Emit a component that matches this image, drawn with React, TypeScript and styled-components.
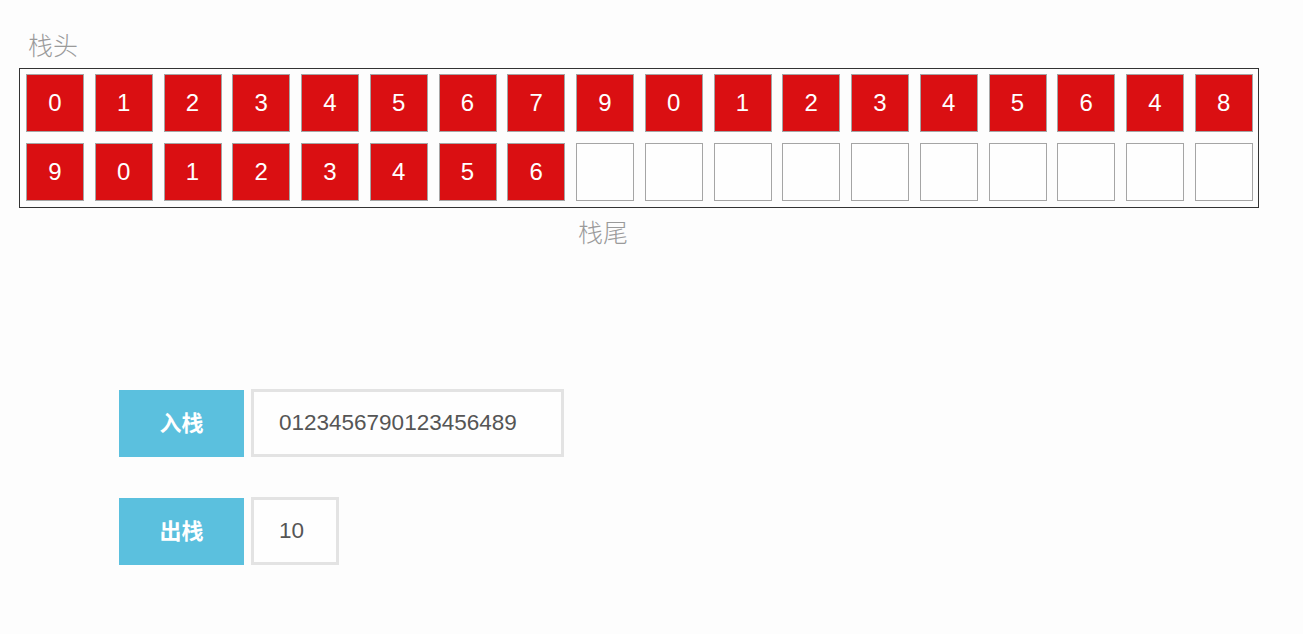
import React from "react";
import styled, { createGlobalStyle } from "styled-components";

const Global = createGlobalStyle`
  html, body { margin: 0; padding: 0; background: #fdfdfd; }
  body { font-family: "Liberation Sans", Arial, "Noto Sans CJK SC", sans-serif; }
`;

const Page = styled.div`
  display: flex;
  flex-direction: column;
  padding: 29px 0 0 19px;
`;

const Label = styled.div<{ $indent: number; $top?: number }>`
  font-size: 25px;
  line-height: 31px;
  color: #9a9a9a;
  padding-left: ${(p) => p.$indent}px;
  margin-top: ${(p) => p.$top ?? 0}px;
  font-family: "Noto Sans CJK SC", sans-serif;
  font-weight: 300;
`;

const Board = styled.div`
  box-sizing: border-box;
  width: 1240px;
  height: 140px;
  margin-top: 8px;
  border: 1px solid #333;
  padding: 5px 5px 0 6px;
  display: flex;
  flex-direction: column;
  gap: 11px;
`;

const Row = styled.div`
  display: flex;
  justify-content: space-between;
`;

const Cell = styled.div<{ $filled: boolean }>`
  box-sizing: border-box;
  width: 58px;
  height: 58px;
  border: 1px solid #a5a5a5;
  background: ${(p) => (p.$filled ? "#da0f12" : "#fefefe")};
  color: #fff;
  font-size: 24px;
  display: flex;
  align-items: center;
  justify-content: center;
`;

const Controls = styled.div`
  display: flex;
  flex-direction: column;
  gap: 40px;
  margin-top: 142px;
  padding-left: 100px;
`;

const ControlRow = styled.div`
  display: flex;
  align-items: center;
  gap: 7px;
`;

const Button = styled.button`
  width: 125px;
  height: 67px;
  border: none;
  background: #5bc0de;
  color: #fff;
  font-size: 22px;
  font-weight: bold;
  font-family: "Noto Sans CJK SC", sans-serif;
  padding: 0 0 5px 0;
`;

const Input = styled.input<{ $w: number }>`
  box-sizing: border-box;
  width: ${(p) => p.$w}px;
  height: 68px;
  border: 3px solid #e3e3e3;
  background: #fefefe;
  padding: 0 0 0 25px;
  font-size: 22.5px;
  color: #555;
  font-family: "Liberation Sans", Arial, sans-serif;
  outline: none;
`;

const row1 = [0, 1, 2, 3, 4, 5, 6, 7, 9, 0, 1, 2, 3, 4, 5, 6, 4, 8];
const row2: (number | null)[] = [9, 0, 1, 2, 3, 4, 5, 6, null, null, null, null, null, null, null, null, null, null];

export default function App() {
  return (
    <>
      <Global />
      <Page>
        <Label $indent={9}>栈头</Label>
        <Board>
          <Row>
            {row1.map((v, i) => (
              <Cell key={i} $filled>
                {v}
              </Cell>
            ))}
          </Row>
          <Row>
            {row2.map((v, i) => (
              <Cell key={i} $filled={v !== null}>
                {v}
              </Cell>
            ))}
          </Row>
        </Board>
        <Label $indent={559} $top={8}>栈尾</Label>
        <Controls>
          <ControlRow>
            <Button>入栈</Button>
            <Input $w={313} defaultValue="0123456790123456489" />
          </ControlRow>
          <ControlRow>
            <Button>出栈</Button>
            <Input $w={88} defaultValue="10" />
          </ControlRow>
        </Controls>
      </Page>
    </>
  );
}
